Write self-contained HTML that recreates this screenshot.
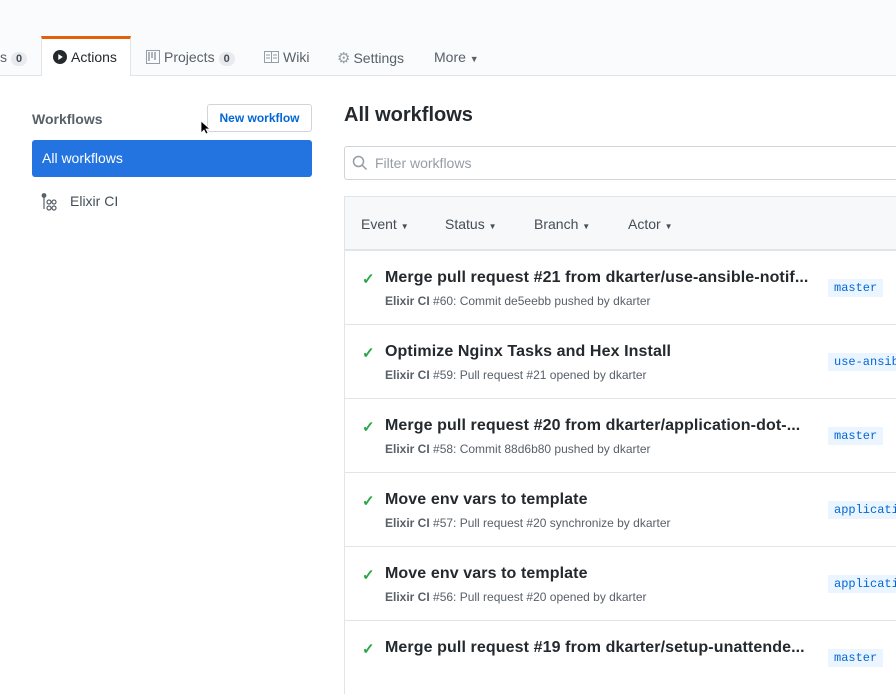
<!DOCTYPE html><html><head><style>
body{margin:0;width:896px;height:653px;overflow:hidden;background:#fff;font-family:"Liberation Sans",sans-serif;color:#24292e;position:relative}
.top{position:absolute;left:0;top:0;width:896px;height:75px;background:#fafbfc;border-bottom:1px solid #e1e4e8}
.tab{position:absolute;top:49px;font-size:14px;color:#586069;white-space:nowrap}
.cnt{display:inline-block;background:#e8eaed;border-radius:10px;font-size:11px;font-weight:bold;padding:1px 5px;margin-left:4px;color:#444d56}
.act{position:absolute;left:41px;top:36px;width:90px;height:40px;background:#fff;border:1px solid #e1e4e8;border-top:3px solid #e36209;border-bottom:none;box-sizing:border-box}
.a{position:absolute;font-size:14px}
.row{position:absolute;left:344px;width:560px;height:74px;border-top:1px solid #e1e4e8;border-left:1px solid #e1e4e8;box-sizing:border-box}
.row .ck{position:absolute;left:17px;top:19px;color:#28a745;font-size:15px;font-weight:bold}
.row .t{position:absolute;left:40px;top:18px;font-size:16px;font-weight:bold;color:#24292e;white-space:nowrap;letter-spacing:.1px}
.row .s{position:absolute;left:40px;top:43px;font-size:12px;color:#586069;white-space:nowrap}
.row .s b{color:#586069}
.row .br{position:absolute;left:483px;top:28px;background:#eaf5ff;color:#0366d6;font-family:"Liberation Mono",monospace;font-size:12px;padding:2px 6px;white-space:nowrap}
</style></head><body>
<div class="top"></div>
<div class="act"></div>
<div class="tab" style="left:0">s<span class="cnt">0</span></div>
<div class="tab" style="left:53px;color:#24292e"><svg width="14" height="14" viewBox="0 0 14 14" style="vertical-align:-2px;margin-right:4px"><circle cx="7" cy="7" r="7" fill="#24292e"/><path d="M5.3 4v6l4.5-3z" fill="#fff"/></svg>Actions</div>
<div class="tab" style="left:146px"><svg width="14" height="14" viewBox="0 0 14 14" style="vertical-align:-2px;margin-right:4px"><rect x=".5" y=".5" width="13" height="13" fill="none" stroke="#959da5"/><path d="M3 2v9M6 2v6M9 2v8" stroke="#959da5" stroke-width="1.5"/></svg>Projects<span class="cnt">0</span></div>
<div class="tab" style="left:264px"><svg width="15" height="12" viewBox="0 0 15 12" style="vertical-align:-1px;margin-right:4px"><rect x=".5" y=".5" width="14" height="11" fill="none" stroke="#959da5"/><path d="M7.5 1v10M2 4h4M2 7h4M9 4h4M9 7h4" stroke="#959da5"/></svg>Wiki</div>
<div class="tab" style="left:337px"><span style="color:#959da5;font-size:15px;margin-right:3px">⚙</span>Settings</div>
<div class="tab" style="left:434px">More <span style="font-size:9px">▼</span></div>

<div class="a" style="left:32px;top:111px;font-weight:bold;color:#586069;font-size:14px">Workflows</div>
<div class="a" style="left:207px;top:104px;width:105px;height:28px;border:1px solid #d1d5da;border-radius:3px;box-sizing:border-box;font-size:12px;font-weight:bold;color:#0366d6;text-align:center;line-height:26px">New workflow</div>
<svg style="position:absolute;left:200px;top:120px" width="10" height="16" viewBox="0 0 10 16"><path d="M1 1v12l3-3 2 4 2-1-2-4h4z" fill="#000" stroke="#fff" stroke-width=".8"/></svg>
<div class="a" style="left:32px;top:140px;width:280px;height:37px;background:#2374e1;border-radius:3px;color:#fff;line-height:37px;box-sizing:border-box;padding-left:10px">All workflows</div>
<svg style="position:absolute;left:41px;top:193px" width="18" height="18" viewBox="0 0 18 18" fill="none" stroke="#586069" stroke-width="1.2"><circle cx="3" cy="2.5" r="1.8" fill="#586069"/><path d="M3 4v12"/><circle cx="8" cy="9" r="2"/><circle cx="13" cy="9" r="2"/><circle cx="8" cy="15" r="2"/><circle cx="13" cy="15" r="2"/></svg>
<div class="a" style="left:70px;top:193px;color:#444d56">Elixir CI</div>

<div class="a" style="left:344px;top:104px;font-size:20px;font-weight:bold">All workflows</div>
<div class="a" style="left:344px;top:146px;width:560px;height:34px;border:1px solid #d1d5da;border-radius:3px;box-sizing:border-box"></div>
<svg style="position:absolute;left:352px;top:155px" width="16" height="16" viewBox="0 0 16 16" fill="none" stroke="#959da5" stroke-width="1.5"><circle cx="6.5" cy="6.5" r="5"/><path d="M10 10l4.5 4.5"/></svg>
<div class="a" style="left:375px;top:155px;color:#959da5">Filter workflows</div>
<div class="a" style="left:344px;top:196px;width:560px;height:54px;background:#f6f8fa;border:1px solid #e1e4e8;box-sizing:border-box"></div>
<div class="a" style="left:361px;top:216px;color:#444d56">Event <span style="font-size:8px">▼</span></div>
<div class="a" style="left:445px;top:216px;color:#444d56">Status <span style="font-size:8px">▼</span></div>
<div class="a" style="left:534px;top:216px;color:#444d56">Branch <span style="font-size:8px">▼</span></div>
<div class="a" style="left:628px;top:216px;color:#444d56">Actor <span style="font-size:8px">▼</span></div>

<div class="row" style="top:250px"><span class="ck">✓</span><span class="t">Merge pull request #21 from dkarter/use-ansible-notif...</span><span class="s"><b>Elixir CI</b> #60: Commit de5eebb pushed by dkarter</span><span class="br">master</span></div>
<div class="row" style="top:324px"><span class="ck">✓</span><span class="t">Optimize Nginx Tasks and Hex Install</span><span class="s"><b>Elixir CI</b> #59: Pull request #21 opened by dkarter</span><span class="br">use-ansible</span></div>
<div class="row" style="top:398px"><span class="ck">✓</span><span class="t">Merge pull request #20 from dkarter/application-dot-...</span><span class="s"><b>Elixir CI</b> #58: Commit 88d6b80 pushed by dkarter</span><span class="br">master</span></div>
<div class="row" style="top:472px"><span class="ck">✓</span><span class="t">Move env vars to template</span><span class="s"><b>Elixir CI</b> #57: Pull request #20 synchronize by dkarter</span><span class="br">application</span></div>
<div class="row" style="top:546px"><span class="ck">✓</span><span class="t">Move env vars to template</span><span class="s"><b>Elixir CI</b> #56: Pull request #20 opened by dkarter</span><span class="br">application</span></div>
<div class="row" style="top:620px"><span class="ck">✓</span><span class="t">Merge pull request #19 from dkarter/setup-unattende...</span><span class="br">master</span></div>
</body></html>
